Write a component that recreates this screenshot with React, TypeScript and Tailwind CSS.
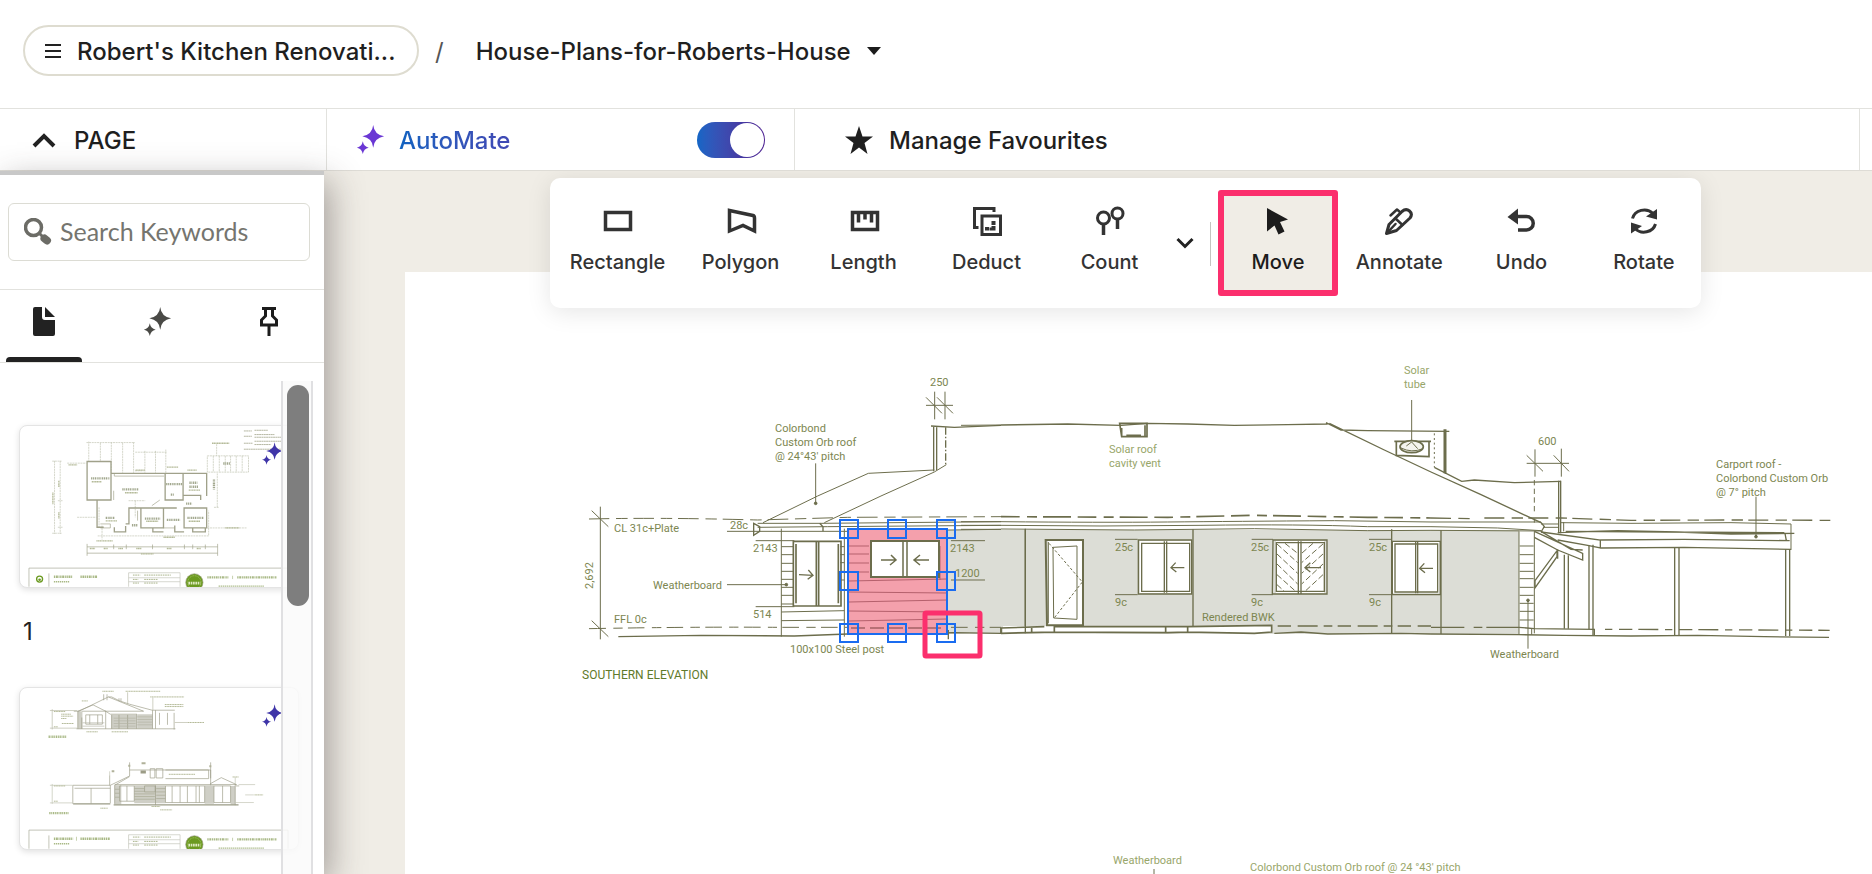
import { useState } from "react";
import type { ReactNode } from "react";

type Tool = {
  label: string;
  icon: ReactNode;
};

const INK = "#6c6d4c";

function Icon({ children }: { children: ReactNode }) {
  return (
    <svg viewBox="0 0 32 32" className="size-8" fill="none" stroke="currentColor" strokeWidth="3" aria-hidden="true">
      {children}
    </svg>
  );
}

const drawTools: Tool[] = [
  {
    label: "Rectangle",
    icon: (
      <Icon>
        <rect x="3.500" y="7.500" width="25" height="17" strokeWidth="3.500" />
      </Icon>
    ),
  },
  {
    label: "Polygon",
    icon: (
      <Icon>
        <path d="M4.500 5.500 28 10.500Q29.500 11 29.500 13V26L18 20.500 4.500 26Z" strokeWidth="3.500" />
      </Icon>
    ),
  },
  {
    label: "Length",
    icon: (
      <Icon>
        <path d="M4.500 7.500h25v17h-25zM10.500 7.500v10M17 7.500v7M23.500 7.500v10" strokeWidth="3.500" />
      </Icon>
    ),
  },
  {
    label: "Deduct",
    icon: (
      <Icon>
        <path d="M23 7V3.500H3.500V22.500H7.500" />
        <path d="M11 11h18.500v18.500H11z" />
        <path d="M20.500 16h4v4h-4zM14 22h4v3.500h-4zM20.500 21h4v4.500h-6v-3h2z" fill="currentColor" stroke="none" />
      </Icon>
    ),
  },
  {
    label: "Count",
    icon: (
      <Icon>
        <circle cx="9.500" cy="13" r="6" />
        <circle cx="23.500" cy="8.500" r="5.500" />
        <path d="M9.500 19v11M23.500 14v10" strokeWidth="3.500" />
      </Icon>
    ),
  },
];

const editTools: Tool[] = [
  {
    label: "Annotate",
    icon: (
      <Icon>
        <g strokeLinejoin="round" strokeLinecap="round">
          <path d="M3.500 28.500 6 19.500 19 6.500Q23 3 26.500 6T27 13L13.500 25.500Z" />
          <path d="M12.500 13.500 19.500 20M4.500 27.500 12.500 19M7.500 10.500 14 4.500 17.500 7.500" strokeWidth="2.500" />
        </g>
      </Icon>
    ),
  },
  {
    label: "Undo",
    icon: (
      <Icon>
        <path d="M12 11.500H21.500A6.500 6.500 0 0 1 21.500 25H13" strokeWidth="3.500" />
        <path d="M2.500 12 13 3.500V19.500Z" fill="currentColor" stroke="none" />
      </Icon>
    ),
  },
  {
    label: "Rotate",
    icon: (
      <Icon>
        <path d="M4.500 13.500A12 11 0 0 1 25 8.500M27.500 19A12 11 0 0 1 7 23.500" />
        <path d="M29 4V14.500L18 11.500ZM3 28.500V17.500L14 21Z" fill="currentColor" stroke="none" />
      </Icon>
    ),
  },
];

function Sparkles({ className, fill }: { className: string; fill: string }) {
  return (
    <svg viewBox="0 0 30 32" className={className} fill={fill} aria-hidden="true">
      <path d="M18 0Q19 10.500 30 12.500 19 14.500 18 25 17 14.500 6 12.500 17 10.500 18 0Z" />
      <path d="M6.500 18Q7.500 24 13 25 7.500 26 6.500 32 5.500 26 0 25 5.500 24 6.500 18Z" />
    </svg>
  );
}

function ToolButton({ label, icon }: Tool) {
  return (
    <button className="flex min-w-0 flex-1 flex-col items-center gap-[9px] pt-[15px] text-[#333]">
      {icon}
      <span className="text-[20px] leading-8 font-medium">{label}</span>
    </button>
  );
}

function Toolbar() {
  return (
    <div className="absolute top-[7px] left-[226px] z-10 flex h-[130px] w-[1151px] rounded-[10px] bg-white pt-3 shadow-[0_4px_24px_rgba(0,0,0,0.1)]">
      <div className="ml-[6px] flex h-[106px] w-[615px]">
        {drawTools.map((tool) => (
          <ToolButton key={tool.label} {...tool} />
        ))}
      </div>
      <button className="flex h-[106px] w-7 items-center justify-center text-[#222]" aria-label="More tools">
        <svg viewBox="0 0 18 12" className="h-3 w-[18px]" fill="none" stroke="currentColor" strokeWidth="3">
          <path d="M1.500 2 9 9.500 16.500 2" />
        </svg>
      </button>
      <div className="mt-8 ml-[11px] h-11 w-px bg-[#c4c4c0]" />
      <button className="ml-[7px] flex h-[106px] w-[120px] flex-col items-center gap-[9px] rounded-[3px] border-[6px] border-[#fb2f6d] bg-[#f0ede6] pt-[9px] text-[#1c1c1c]">
        <Icon>
          <path d="M5 3 26 14.500 18 17 22.500 26.500 16.500 29.500 12.500 20.500 5 26.500Z" fill="currentColor" stroke="none" />
        </Icon>
        <span className="text-[20px] leading-8 font-medium">Move</span>
      </button>
      <div className="-mr-1 flex h-[106px] flex-1">
        {editTools.map((tool) => (
          <ToolButton key={tool.label} {...tool} />
        ))}
      </div>
    </div>
  );
}

function TitleBlock({ y, name }: { y: number; name: string }) {
  return (
    <g>
      <path d={`M85 ${y + 56}V${y}H865V${y + 56}M145 ${y + 16}V${y + 56}`} stroke="#a5a694" strokeWidth="2" fill="none" />
      <path
        d={`M385 ${y + 14}H540V${y + 56}M385 ${y + 14}V${y + 56}M385 ${y + 29}H540M385 ${y + 41}H540`}
        stroke="#c3c4b8"
        strokeWidth="2"
        fill="none"
      />
      <path
        d={`M398 ${y + 21}h22M432 ${y + 21}h80M398 ${y + 34}h16M432 ${y + 34}h42M398 ${y + 45}h18M432 ${y + 45}h42`}
        stroke="#aab48c"
        strokeWidth="3"
        strokeDasharray="5 2"
      />
      <path d={name} stroke="#a9b986" strokeWidth="7" strokeDasharray="4 2 6 2 3 2" />
      <path d={`M160 ${y + 41}h46M656 ${y + 54}h136`} stroke="#a9b986" strokeWidth="4" strokeDasharray="4 2" />
      <path d={`M622 ${y + 28}h64M712 ${y + 28}h118`} stroke="#a9b986" strokeWidth="7" strokeDasharray="4 2 6 2 3 2" />
      <path d={`M698 ${y + 23}v10`} stroke="#a9b986" strokeWidth="2" />
      <circle cx="583" cy={y + 43} r="26" fill="#6b9a20" />
      <circle cx="583" cy={y + 43} r="20" fill="none" stroke="#b8d080" strokeWidth="2" strokeDasharray="3 2" />
      <path d={`M565 ${y + 45}h36`} stroke="#dfeac2" strokeWidth="8" strokeDasharray="5 2" />
    </g>
  );
}

function FloorPlan() {
  return (
    <svg viewBox="58 46 837 483" className="h-full w-full" fill="none" stroke="#a0a18a" strokeWidth="2" aria-hidden="true">
      <g stroke="#c0c2b0" strokeDasharray="6 2">
        <path d="M265 92V150M300 96V150M333 94V186M367 96V186M400 94V186M258 95H404" />
        <path d="M434 120V186M466 120V186M497 116V186M405 124H500M404 180H430" />
        <path d="M622 135H746V184H622ZM640 135v49M658 135v49M676 135v49M692 135v49M709 135v49M727 135v49M650 100v35" />
        <path d="M162 150V370M179 150V370M155 151h28M172 270h14M155 368h28M172 350h14" />
        <path d="M652 188V290M642 290h14M230 320h58M292 376H626V300M622 352H742M200 157h58" />
        <path d="M305 345v42M385 270h50M405 270v50M296 290v60" />
      </g>
      <path d="M260 400V436M653 400V436M260 409H653M260 428H653M340 402v14M378 402v14M457 402v14M553 402v14M578 402v14M616 402v14" />
      <path d="M260 152H332V268H260ZM332 188H620V256M495 188V268H549V188M549 254H602V268M290 268V350H310M342 350V364H376V346" strokeWidth="4" />
      <path d="M376 340H386V292H490V352H422V292M458 352V364H490M490 292H530M552 292H620V352H552ZM578 352V364H616V352M524 345V364H552" strokeWidth="4" />
      <path d="M342 188v8h150M340 240v28M455 285l24-17M490 352h34M300 340h30v12h-30M412 300v30" />
      <path
        d="M272 203h56M366 236h48M498 220h48M568 216h24M568 228h28M512 252h10M558 279h18M316 322h28M434 324h46M500 328h40M562 322h48M642 206v30M670 158h22M395 344h18"
        stroke="#a2a88e"
        strokeWidth="7"
        strokeDasharray="4 2 3 2"
      />
      <path
        d="M374 246h38M274 213h30M566 238h34M438 332h36M566 332h34M316 331h34M204 162h26M636 97h52M500 169h34M562 178h28M406 178h28M288 391h50M490 380h34M422 430h38M676 352h42M157 245v36M175 210v20M175 305v20M268 414h16M310 414h12M354 414h14M408 414h16M500 414h14M590 414h12"
        stroke="#b4ba98"
        strokeWidth="4"
        strokeDasharray="4 1"
      />
      <path d="M732 60h24M732 76h24M732 97h26M764 58h40M764 71h60M764 79h84M764 91h84M764 101h50M732 115h116" stroke="#b5b7a2" strokeWidth="3" strokeDasharray="6 1" />
      <TitleBlock y={473} name="M160 499h56M240 499h50" />
      <circle cx="117" cy="506" r="9" fill="#fff" stroke="#6b9a20" strokeWidth="4" />
      <circle cx="117" cy="508" r="4" fill="#6b9a20" stroke="none" />
    </svg>
  );
}

function ElevationSheet() {
  return (
    <svg viewBox="58 142 837 483" className="h-full w-full" fill="none" stroke="#9b9c86" strokeWidth="2" aria-hidden="true">
      <g fill="#cfcfc6" stroke="none">
        <path d="M232 211h14v53h-14zM333 222h76v42h-76zM411 220h46v44h-46z" />
        <path d="M343 434h20v58h-20zM402 434h94v54h-94zM614 434h28v56h-28zM692 436h14v56h-14z" />
      </g>
      <path d="M232 264V211L278 192 316 211V264M220 211H236L324 168 430 211H245M324 168h10l24 12 30 10 68 18M314 210 330 220H410" />
      <path d="M228 264H526M244 230v34M256 222h50v28h-50zM268 222v28M292 222v28M334 222v42M356 222v42M382 222v42M409 220v44M457 208v56M466 208v56M478 216v36M502 216v36M522 216v50M456 208h68M310 160v18M320 160v18M356 172v8M362 172v8" />
      <path d="M411 228h46M411 236h46M411 244h46M411 252h46M246 256h66M246 246h66M340 232h66M340 240h66M340 248h66M340 256h66" stroke="#b3b4a4" />
      <path d="M155 205V266M148 209H230M148 262H230M458 170v38M382 154v36M524 245h40" stroke="#b6b8a4" />
      <path d="M217 490V434H330V488M222 443H330M272 443v46M330 434 388 406V365M328 404v30M343 490V434L388 408M388 388H632V434M632 365v48M343 432H710L664 411 630 430M706 430V494M718 436h-10" />
      <path d="M358 436h44v46h-44zM380 436v46M433 436h32v18h-32zM496 436h118v50H496zM516 436v50M540 436v50M562 436v50M588 436v50M598 436v50M642 436h50v50h-50zM668 436v50M466 434v60M450 384h14v28h-14zM468 384h20v28h-20zM496 388h130v26h-130" />
      <path d="M218 490H330M340 493H716" strokeWidth="4" />
      <path d="M402 444h30M402 452h30M402 460h62M402 468h62M402 476h62M468 444h28M468 454h28M468 464h28M468 474h28M344 446h14M344 458h14M344 470h14" stroke="#a6a792" />
      <path d="M155 430V490M148 434H216M148 487H216M716 432h50M706 486h56M736 463h26M328 392v12M706 410v20" stroke="#c0c2b0" />
      <path d="M421 394h16" strokeWidth="9" />
      <path d="M334 392h8M384 375h6M424 368h12M628 377h6" strokeWidth="6" stroke="#b0b199" />
      <path
        d="M306 151h34M376 151h104M450 168h102M244 180h18M494 191h56M494 197h56M182 220h30M182 226h36M182 233h16M184 248h36M564 245h48M258 273h34M334 273h50M506 401h80M764 463h26M300 503h22M454 498h26M480 508h36M698 409h18M160 212h34M160 436h34M160 482h12M160 258h12"
        stroke="#b4ba98"
        strokeWidth="3"
        strokeDasharray="4 1"
      />
      <path d="M144 288h54M146 518h58" stroke="#a9b986" strokeWidth="7" strokeDasharray="4 2 3 2" />
      <TitleBlock y={569} name="M160 595h58M240 595h88" />
      <path d="M228 589v12" stroke="#a9b986" />
    </svg>
  );
}

function PageCard({ children }: { children: ReactNode }) {
  return (
    <button className="relative block h-[163px] w-[280px] overflow-hidden rounded-lg border border-[#e4e4e4] bg-white shadow-[0_2px_6px_rgba(0,0,0,0.12)]">
      {children}
      <Sparkles className="absolute top-4 left-[242px] h-[23px] w-[21px]" fill="#3f35a8" />
    </button>
  );
}

function PagePanel() {
  const [query, setQuery] = useState("");

  return (
    <aside className="relative z-20 flex w-[324px] shrink-0 flex-col border-t-4 border-[#c8c8c8] bg-white shadow-[6px_10px_32px_rgba(60,50,50,0.42)]">
      <div className="border-b border-[#e2e2de] px-2 pt-[28px] pb-[28px]">
        <label className="flex h-[58px] w-[302px] items-center rounded-md border border-[#dcdcd4] pl-[15px]">
          <svg viewBox="0 0 28 28" className="size-7 shrink-0" fill="none" stroke="#6c6c66" aria-hidden="true">
            <circle cx="9.500" cy="9.500" r="8" strokeWidth="3.500" />
            <path d="M15 15 19 19" strokeWidth="3" />
            <path d="M20.500 20.500 23 22.500" strokeWidth="8" strokeLinecap="round" />
          </svg>
          <input
            value={query}
            onChange={(event) => setQuery(event.target.value)}
            placeholder="Search Keywords"
            aria-label="Search Keywords"
            className="ml-2 w-full min-w-0 font-['Lato',sans-serif] text-[25px] text-[#555] outline-none placeholder:text-[#75756f]"
          />
        </label>
      </div>

      <div className="flex h-[73px] shrink-0 border-b border-[#e2e2de] pr-2 pl-[6px]">
        <button className="relative flex w-[76px] justify-center pt-[17px]" aria-label="Pages">
          <svg viewBox="0 0 22 29" className="h-[29px] w-[22px]" fill="#222">
            <path d="M2 0H9V10Q9 13 12 13H22V27Q22 29 20 29H2Q0 29 0 27V2Q0 0 2 0Z" />
            <path d="M12 0 22 10H12Z" />
          </svg>
          <span className="absolute inset-x-0 bottom-0 h-[5px] rounded-t bg-[#222]" />
        </button>
        <button className="ml-[37px] flex w-[76px] justify-center pt-[17px]" aria-label="AutoMate pages">
          <Sparkles className="h-[29px] w-[29px]" fill="#4a4a46" />
        </button>
        <button className="ml-[36px] flex w-[76px] justify-center pt-[17px]" aria-label="Pinned pages">
          <svg viewBox="0 0 20 29" className="h-[29px] w-5" fill="none" stroke="#1c1c1c" strokeWidth="3">
            <path d="M3 1.500H17M6.500 2V9L2.500 13V18H17.500V13L13.500 9V2M10 18V29" />
          </svg>
        </button>
      </div>

      <div className="relative min-h-0 flex-1 overflow-hidden">
        <div className="pt-[62px] pl-[19px]">
          <PageCard>
            <FloorPlan />
          </PageCard>
          <p className="mt-[26px] mb-[37px] pl-1 text-[24px] leading-9 text-[#222]">1</p>
          <PageCard>
            <ElevationSheet />
          </PageCard>
        </div>
        <div className="absolute top-[18px] bottom-0 left-[281px] w-8 border-x-2 border-[#e0e0e2] bg-[#fafafa]/85 px-1 pt-1">
          <div className="h-[221px] w-[22px] rounded-full bg-[#7e7e7e]" />
        </div>
      </div>
    </aside>
  );
}

type Note = { x: number; y: number; lines: string[]; soft?: boolean };

const notes: Note[] = [
  { x: 929, y: 386, lines: ["250"] },
  { x: 774, y: 432, lines: ["Colorbond", "Custom Orb roof", "@ 24°43' pitch"] },
  { x: 613, y: 532, lines: ["CL 31c+Plate"] },
  { x: 729, y: 529, lines: ["28c"] },
  { x: 752, y: 552, lines: ["2143"] },
  { x: 949, y: 552, lines: ["2143"] },
  { x: 954, y: 577, lines: ["1200"] },
  { x: 652, y: 589, lines: ["Weatherboard"] },
  { x: 613, y: 623, lines: ["FFL 0c"] },
  { x: 752, y: 618, lines: ["514"] },
  { x: 789, y: 653, lines: ["100x100 Steel post"] },
  { x: 1108, y: 453, lines: ["Solar roof", "cavity vent"], soft: true },
  { x: 1403, y: 374, lines: ["Solar", "tube"], soft: true },
  { x: 1114, y: 551, lines: ["25c"] },
  { x: 1114, y: 606, lines: ["9c"] },
  { x: 1250, y: 551, lines: ["25c"] },
  { x: 1250, y: 606, lines: ["9c"] },
  { x: 1368, y: 551, lines: ["25c"] },
  { x: 1368, y: 606, lines: ["9c"] },
  { x: 1201, y: 621, lines: ["Rendered BWK"] },
  { x: 1537, y: 445, lines: ["600"] },
  { x: 1715, y: 468, lines: ["Carport roof -", "Colorbond Custom Orb", "@ 7° pitch"] },
  { x: 1489, y: 658, lines: ["Weatherboard"] },
  { x: 1112, y: 864, lines: ["Weatherboard"], soft: true },
  { x: 1249, y: 871, lines: ["Colorbond Custom Orb roof @ 24 °43' pitch"], soft: true },
];

// Wall fills go under the line work, windows cut back to white on top of them.
function Walls() {
  return (
    <g>
      <path d="M946 530H1518V634H946Z" fill="#dcddd6" />
      <path d="M1002 626H1270V633H1002Z" fill="#fff" />
      <g fill="#fff">
        <path d="M1047 540H1081V625H1047ZM1139 541H1190V593H1139ZM1275 541H1323V593H1275ZM1392 542H1438V593H1392Z" />
      </g>
    </g>
  );
}

function WestWing() {
  return (
    <g transform="translate(560 340) scale(0.33333)" strokeWidth="3">
      <path d="M118 500V898M92 512 142 560M92 842 142 890M1095 172 1143 220M1128 172 1176 220M1095 196H1176M1121 155V238M1152 155V238" />
      <path d="M84 537Q300 532 590 540L860 532 1320 530" strokeDasharray="62 20 34 18" />
      <path d="M84 866Q400 860 650 862L870 862M1170 862H1320" strokeDasharray="50 22 28 16" />
      <path d="M172 890 420 886 700 888 860 882 1180 878 1320 880" strokeWidth="4" />
      <path d="M606 548 770 468 922 400 1120 390M790 548 960 468 1120 396 1156 374M590 550H780L1320 545M590 562 800 560 1320 556M498 574H860L1320 568" />
      <path d="M578 550 596 560V574L578 586ZM776 550 786 560V574M1110 258 1180 262 1320 256M1118 258V394M1127 258V390" strokeWidth="4" />
      <path d="M1154 262V374" strokeDasharray="22 6 5 6" strokeWidth="4" />
      <path d="M764 370V490M498 734H676M584 602H700M584 800H700M1170 602H1272M1170 720H1272" />
      <circle cx="764" cy="490" r="4" fill={INK} />
      <circle cx="676" cy="734" r="4" fill={INK} />
      <path d="M661 566V890M661 620H698M661 644H698M661 670H698M661 694H698M661 718H698M661 742H698M661 766H698M661 792H698M661 816 850 812M661 842 850 840M850 566V890M838 620H850M838 644H850M838 668H850M838 694H850M838 720H850" />
      <path d="M697 604H840V798H697ZM705 612V790M832 612V790M766 606V796M773 606V796" strokeWidth="5" />
      <path d="M714 704 756 706M742 690 756 706 740 718" strokeWidth="4" />
      <path d="M1393 566V880M1320 864V880M1162 870V898" strokeWidth="4" />
    </g>
  );
}

function MainHouse() {
  return (
    <g transform="translate(1000 340) scale(0.33333)" strokeWidth="3">
      <path d="M0 255 200 252 360 256 440 250 560 252 700 256 860 254 980 252M975 248 1020 270 1100 272 1345 274M985 250 1150 330 1290 396" strokeWidth="4" />
      <path d="M356 250H438V290H362ZM362 264V290M432 256V292M376 286H420" strokeWidth="5" />
      <path d="M1232 180V304" />
      <path d="M1186 304V346L1284 350V306M1180 304H1290M1334 268V402M1330 268V400" strokeWidth="5" />
      <ellipse cx="1232" cy="320" rx="35" ry="18" strokeWidth="5" fill="#f4f4ee" />
      <path d="M1200 324Q1232 340 1266 326M1216 318 1232 306 1250 326" />
      <path d="M1300 280V382" strokeDasharray="6 8" />
      <path d="M0 530 500 532 760 526 1100 532 1290 534" strokeDasharray="56 22 30 18 84 20" strokeWidth="5" />
      <path d="M0 545Q300 548 500 546T1000 542L1290 546M0 556Q300 560 600 556T1100 560L1290 560M0 567 400 570 760 566 1100 572 1290 571" />
      <path d="M-120 256 0 255M-120 545H0M-120 556H0M-120 568H0" />
      <path d="M73 568V858M576 568V860M1172 568V882M1320 570V882" strokeWidth="4" />
      <path d="M134 600H246V856H138Z" strokeWidth="6" />
      <path d="M156 622 228 618V838L158 834ZM142 606V850" />
      <path d="M144 610 244 726 158 836" strokeDasharray="8 6" />
      <path d="M412 600H572V762H412ZM422 610H566V754H422ZM490 604V758M497 604V758" strokeWidth="4" />
      <path d="M816 600H978V762H814ZM826 608H970V754H826ZM892 604V760M900 604V760" strokeWidth="4" />
      <path d="M1174 604H1318V764H1174ZM1182 612H1310V756H1182ZM1244 606V760M1250 606V760" strokeWidth="4" />
      <path d="M550 683H510M524 668 510 683 526 696M960 683H912M928 668 912 683 928 696M1296 685H1256M1270 670 1256 685 1272 698" strokeWidth="4" />
      <path
        d="M828 612 890 668M828 642 890 700M828 672 890 732M828 704 884 754M828 734 850 754M852 610 890 640M966 612 902 668M966 642 902 700M966 672 902 732M966 704 912 754M936 610 902 640"
        strokeDasharray="18 8"
      />
      <path d="M342 598H410M342 764H410M752 598H816M752 764H816M1104 598H1172M1104 764H1172" />
      <path d="M0 880V864L130 860M0 880 160 876 500 878 560 876 760 880 812 876V856L560 860H160V876M92 864V876M494 862V876M560 862V876" strokeWidth="5" />
      <path d="M820 880 900 876 980 882 1200 880 1290 882" strokeWidth="4" />
      <path d="M830 858H1290" strokeDasharray="40 20 60 18 26 16" strokeWidth="5" />
    </g>
  );
}

function Carport() {
  return (
    <g transform="translate(1430 340) scale(0.33333)" strokeWidth="3">
      <path d="M287 370H414M287 346 336 394M368 346 414 394M312 328V410M391 326V410" />
      <path d="M310 420V520M310 536V548" strokeDasharray="16 10" />
      <path d="M10 382 92 424 130 420 250 428 390 424M0 396 150 464 330 548 340 560 330 576" strokeWidth="4" />
      <path d="M383 422V580M389 422V580" strokeWidth="4" />
      <path d="M0 534 130 536M160 534H390L600 541 900 540 1198 541" strokeDasharray="60 22 34 16" strokeWidth="4" />
      <path d="M0 546H330M0 560 200 564 330 572M0 571 330 573M330 552H382M336 562H382M398 546V574M390 548 600 550 900 548 1080 552V630" />
      <path d="M380 578 560 572 740 576 900 582 1090 580M404 574 700 576 1060 578" strokeWidth="4" />
      <path d="M330 576 508 600V624L470 616 380 600M508 600 760 598 1076 602M508 624 760 622 1080 628M1062 580 1066 602" strokeWidth="4" />
      <path d="M310 574 455 640V660L380 630 310 592M330 574 420 628 455 630M312 722 378 632V650L312 744ZM380 628V656" strokeWidth="4" />
      <path d="M400 644V866M412 646V866M474 616V868M486 614V886M731 624V888M744 624V888M1064 628V888M1076 628V888" strokeWidth="4" />
      <path d="M264 574V884M310 574V880M302 866V884M266 618H308M266 644H308M266 670H308M266 694H308M266 716H308M266 742H308M266 766H308M266 790H308M266 814H308M266 840H308" />
      <path d="M0 862H264" strokeDasharray="100 28 26 12" strokeWidth="4" />
      <path d="M264 862 310 866 490 868V886M264 884 400 886 600 888 800 886 1000 890 1194 892M0 882 264 884" strokeWidth="4" />
      <path d="M522 868 800 869 1196 871" strokeDasharray="22 20 40 18 60 20" strokeWidth="4" />
      <path d="M975 470V590M291 782V926" />
      <circle cx="975" cy="590" r="4" fill={INK} />
      <circle cx="291" cy="781" r="4" fill={INK} />
    </g>
  );
}

const handles = [
  [848, 529],
  [896, 529],
  [945, 529],
  [848, 581],
  [945, 581],
  [848, 633],
  [896, 633],
  [945, 633],
];

function Selection() {
  return (
    <g fill="none">
      <rect x="847" y="529" width="99" height="105" fill="#f4a0ac" />
      <g stroke="#b5606c">
        <path d="M848 546h20M848 554h20M848 563h20M848 572h20M848 581l98-2M848 592l98 1M848 602l98-2M848 611l98 1M848 621l98-2M939 546v34" />
        <path d="M850 628H944" strokeDasharray="14 5" stroke="#7a4040" />
      </g>
      <path d="M870 541H938V577H870Z" fill="#fff" stroke={INK} strokeWidth="2" />
      <path d="M902 541V577M906 541V577M880 560H895M890 555L895 560L889 565M928 560H913M919 555L913 560L919 565" stroke={INK} strokeWidth="1.500" />
      <rect x="847" y="529" width="99" height="105" stroke="#1a6cf0" strokeWidth="2" />
      {handles.map(([cx, cy]) => (
        <rect key={`${cx}-${cy}`} x={cx - 9} y={cy - 9} width="18" height="18" stroke="#1a6cf0" strokeWidth="2" />
      ))}
      <rect x="924" y="613" width="55" height="43" rx="1" stroke="#fb2f6d" strokeWidth="5" />
    </g>
  );
}

function Drawing() {
  return (
    <svg viewBox="404 272 1468 602" className="block h-[602px] w-[1468px]" role="img" aria-label="Southern elevation">
      <Walls />
      <g fill="none" stroke={INK}>
        <WestWing />
        <MainHouse />
        <Carport />
      </g>
      <path d="M1153 869V874" stroke={INK} />
      <g fontFamily="Roboto, sans-serif" fontSize="11">
        {notes.map((note) =>
          note.lines.map((line, i) => (
            <text key={`${note.x}-${note.y}-${i}`} x={note.x} y={note.y + i * 14} fill={note.soft ? "#98a66a" : "#7c8650"}>
              {line}
            </text>
          )),
        )}
        <text x="592" y="589" transform="rotate(-90 592 589)" fill="#7c8650">
          2,692
        </text>
      </g>
      <text x="581" y="679" fontFamily="Roboto, sans-serif" fontSize="12" fill="#5f7a2a">
        SOUTHERN ELEVATION
      </text>
      <Selection />
    </svg>
  );
}

export default function App() {
  const [autoMate, setAutoMate] = useState(true);

  return (
    <div className="flex h-screen flex-col overflow-hidden bg-white font-['Inter','Noto_Sans',sans-serif] text-[#1f1f1f]">
      <header className="flex h-[109px] shrink-0 items-start border-b border-[#e2e2de] pt-[25px] pl-[23px]">
        <button className="flex h-[51px] w-[396px] items-center rounded-full border-2 border-[#dedcd0] pl-5">
          <svg viewBox="0 0 16 16" className="size-4" stroke="#222" strokeWidth="2" aria-hidden="true">
            <path d="M0 2H16M0 8H16M0 14H16" />
          </svg>
          <span className="ml-4 pt-0.5 text-[24px] font-medium">Robert's Kitchen Renovati...</span>
        </button>
        <span className="ml-4 flex h-[51px] items-center pt-0.5 text-[24px] text-[#555]">/</span>
        <button className="ml-8 flex h-[51px] items-center gap-4 text-[24px] font-medium">
          <span className="pt-0.5">House-Plans-for-Roberts-House</span>
          <svg viewBox="0 0 14 8" className="h-2 w-[14px]" fill="#1c1c1c" aria-hidden="true">
            <path d="M0 0H14L7 8Z" />
          </svg>
        </button>
      </header>

      <div className="flex h-[62px] shrink-0 border-b border-[#dedcd6] text-[24px] font-medium">
        <button className="flex w-[327px] items-center gap-[18px] border-r border-[#e2e2de] pl-8">
          <svg viewBox="0 0 24 16" className="h-4 w-6" fill="none" stroke="#222" strokeWidth="4" aria-hidden="true">
            <path d="M2 14 12 4 22 14" />
          </svg>
          <span className="pt-0.5">PAGE</span>
        </button>
        <label className="flex w-[468px] items-center border-r border-[#e2e2de] pr-[29px] pl-[29px]">
          <Sparkles className="h-[29px] w-[29px]" fill="#6a37d4" />
          <span className="ml-[14px] bg-gradient-to-r from-[#0f62c0] to-[#4049b4] bg-clip-text pt-0.5 text-transparent">AutoMate</span>
          <input
            type="checkbox"
            checked={autoMate}
            onChange={() => setAutoMate(!autoMate)}
            className="peer sr-only"
          />
          <span className="ml-auto flex h-9 w-[68px] items-center justify-start rounded-full bg-[#c4c4c4] p-px peer-checked:justify-end peer-checked:bg-linear-to-r peer-checked:from-[#1266c6] peer-checked:to-[#4c1f91]">
            <span className="size-[34px] rounded-full bg-white" />
          </span>
        </label>
        <div className="flex flex-1 items-center">
          <button className="ml-[50px] flex items-center gap-4">
            <svg viewBox="0 0 28 28" className="size-7" fill="#1f1f1f" aria-hidden="true">
              <path d="M14 0 17.500 10.500H28L19.500 17 22.500 28 14 21.500 5.500 28 8.500 17 0 10.500H10.500Z" />
            </svg>
            <span className="pt-0.5">Manage Favourites</span>
          </button>
        </div>
        <div className="w-[13px] border-l border-[#e2e2de]" />
      </div>

      <div className="flex min-h-0 flex-1">
        <PagePanel />
        <main className="relative min-w-0 flex-1 overflow-hidden bg-[#f0ede6] pt-[101px] pl-[81px]">
          <Toolbar />
          <div className="min-h-full bg-white">
            <Drawing />
          </div>
        </main>
      </div>
    </div>
  );
}
